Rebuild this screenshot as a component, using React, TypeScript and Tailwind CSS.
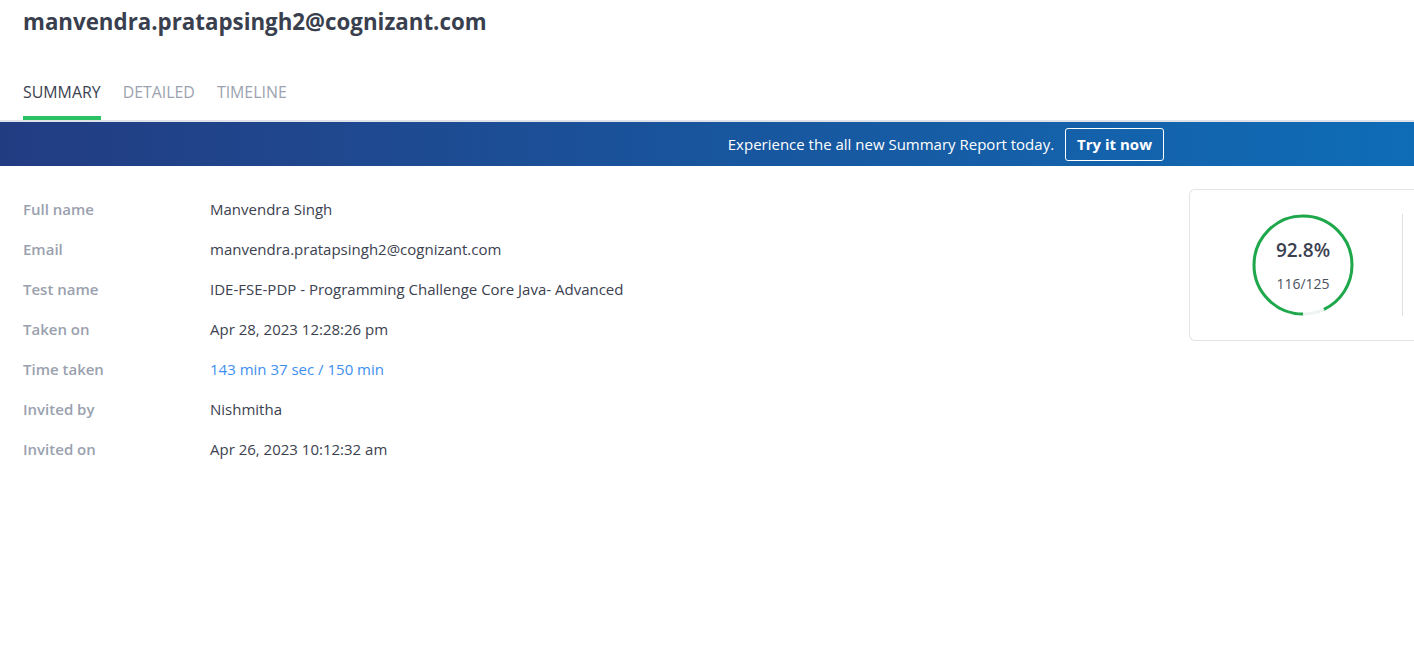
const rows: [string, string, boolean?][] = [
  ["Full name", "Manvendra Singh"],
  ["Email", "manvendra.pratapsingh2@cognizant.com"],
  ["Test name", "IDE-FSE-PDP - Programming Challenge Core Java- Advanced"],
  ["Taken on", "Apr 28, 2023 12:28:26 pm"],
  ["Time taken", "143 min 37 sec / 150 min", true],
  ["Invited by", "Nishmitha"],
  ["Invited on", "Apr 26, 2023 10:12:32 am"],
];

function ScoreRing() {
  const r = 49;
  const c = 2 * Math.PI * r;
  const pct = 0.928;
  return (
    <svg width="104" height="104" viewBox="0 0 104 104">
      <circle cx="52" cy="52" r={r} fill="none" stroke="#eef5f1" strokeWidth="3" />
      <circle
        cx="52"
        cy="52"
        r={r}
        fill="none"
        stroke="#1ea84b"
        strokeWidth="3"
        strokeDasharray={`${c * pct} ${c}`}
        transform="rotate(90 52 52)"
      />
    </svg>
  );
}

export default function App() {
  return (
    <div className="w-[1414px] h-[648px] overflow-hidden bg-white font-['Open_Sans',sans-serif] text-[#3b4150]">
      <div className="px-[23px] pt-[7px]">
        <h1 className="text-[22.3px] font-bold leading-[30px] text-[#393f4e]">
          manvendra.pratapsingh2@cognizant.com
        </h1>
        <div className="mt-[44px] flex gap-[22px] text-[15.9px] uppercase">
          <div className="flex flex-col">
            <span className="leading-[22px] text-[#3b4150]">Summary</span>
            <div className="mt-[13px] h-[4px] bg-[#2bc165]" />
          </div>
          <span className="leading-[22px] text-[#9ca3b0]">Detailed</span>
          <span className="leading-[22px] text-[#9ca3b0]">Timeline</span>
        </div>
      </div>
      <div className="h-[2px] bg-[#dfe2e8]" />
      <div className="flex h-[44px] items-center justify-end bg-gradient-to-r from-[#223c82] via-[#18559d] to-[#0e6cb6] pr-[250px]">
        <span className="text-[15px] text-white">Experience the all new Summary Report today.</span>
        <button className="ml-[11px] h-[33px] rounded-[3px] border border-white px-[11px] text-[15px] font-bold text-white">
          Try it now
        </button>
      </div>
      <div className="flex pt-[23px]">
        <div className="flex-1 pl-[23px]">
          {rows.map(([k, v, link]) => (
            <div key={k} className="flex h-[40px] items-center text-[15px]">
              <span className="w-[187px] font-semibold text-[#9aa1ae]">{k}</span>
              <span className={link ? "text-[#3e8ff0]" : "text-[#3b4150]"}>{v}</span>
            </div>
          ))}
        </div>
        <div className="flex h-[152px] w-[225px] items-center rounded-l-[6px] border border-r-0 border-[#e2e4e8] pl-[61px]">
          <div className="relative flex h-[104px] w-[104px] items-center justify-center">
            <ScoreRing />
            <div className="absolute inset-0 flex flex-col items-center justify-center">
              <span className="text-[19px] font-semibold text-[#3a404f]">92.8%</span>
              <span className="mt-[8px] text-[14px] text-[#4b5160]">116/125</span>
            </div>
          </div>
          <div className="ml-[47px] h-[102px] w-px bg-[#dcdfe4]" />
        </div>
      </div>
    </div>
  );
}
